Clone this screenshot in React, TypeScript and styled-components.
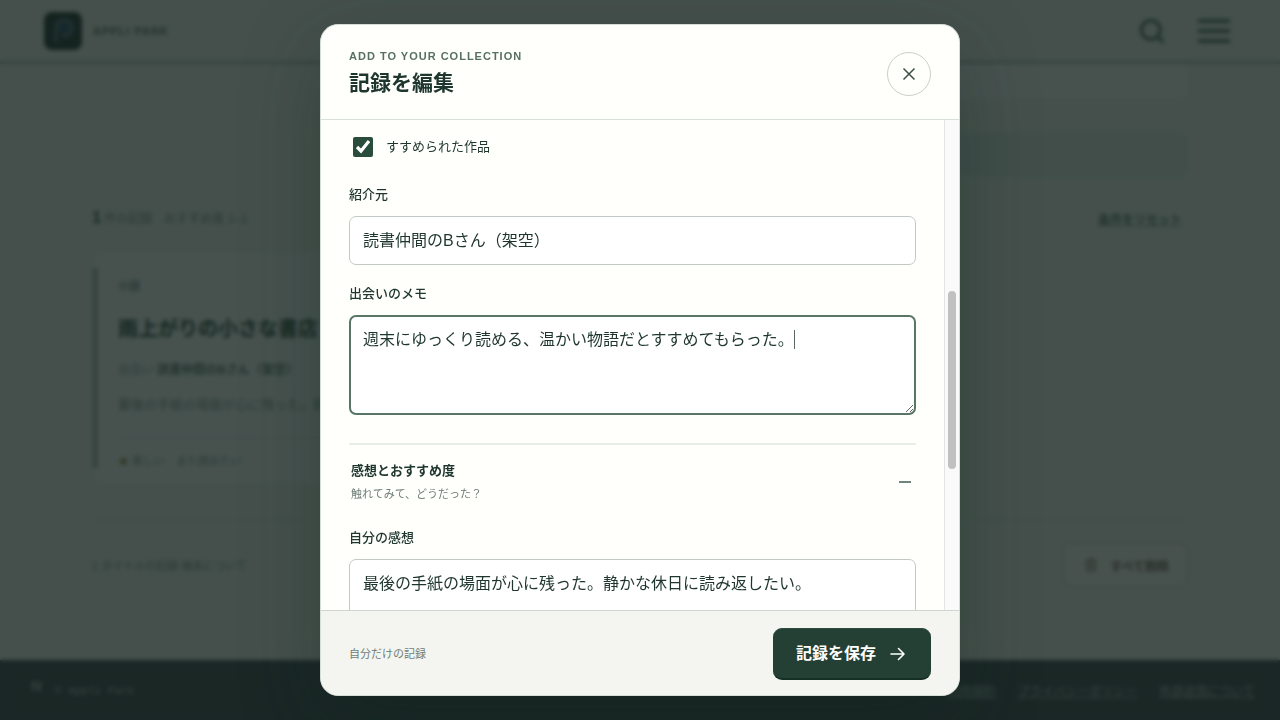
import React from 'react';
import styled, { createGlobalStyle } from 'styled-components';
import { Search, Trash2 } from 'lucide-react';

const GlobalStyle = createGlobalStyle`
  *, *::before, *::after { box-sizing: border-box; }
  body {
    margin: 0;
    color: #1f362f;
    background: #f3f5ef;
    font-family: "Liberation Sans", "Noto Sans CJK JP", sans-serif;
    overflow: hidden;
  }
  button, input, textarea { font: inherit; color: inherit; }
  h2, h3, p { margin: 0; }
`;

/* ---------- page behind the dialog ---------- */

const Page = styled.div`
  min-height: 100vh;
  display: flex;
  flex-direction: column;
`;

const SiteHeader = styled.header`
  height: 64px;
  padding: 1px 46px 0 44px;
  display: flex;
  align-items: center;
  justify-content: space-between;
  border-bottom: 3px solid #b4beb6;
`;

const Brand = styled.a`
  display: flex;
  align-items: center;
  gap: 11px;
  color: #5a6963;
  font-size: 11px;
  font-weight: 700;
  letter-spacing: 1px;
  text-decoration: none;
`;

const HeaderActions = styled.div`
  display: flex;
  align-items: center;
  gap: 28px;
`;

const PlainButton = styled.button`
  display: flex;
  padding: 0;
  border: 0;
  background: none;
  color: #587069;
`;

const Main = styled.main`
  flex: 1;
  padding: 0 92px;
`;

const SelectBar = styled.div`
  height: 34px;
  margin-left: 50%;
  border-radius: 0 0 8px 8px;
  background: #ffffff;
`;

const FilterBar = styled.div`
  height: 44px;
  margin: 35px 0 0 50%;
  border-radius: 8px;
  background: #e1ebe7;
`;

const ResultRow = styled.div`
  display: flex;
  align-items: center;
  justify-content: space-between;
  height: 24px;
  margin-top: 29px;
  padding-right: 6px;
  font-size: 12px;
  color: #84928a;

  strong { font-size: 16px; color: #2f463f; }
  a { color: #647c72; font-weight: 700; }
`;

const Cards = styled.div`
  display: grid;
  grid-template-columns: 1fr 1fr;
  gap: 16px;
  margin-top: 21px;
`;

const Card = styled.article`
  display: flex;
  background: #fdfffe;
  border: 1px solid #e4e9e4;
  border-radius: 10px;
  height: 234px;
`;

const CardSpine = styled.div`
  width: 5px;
  margin: 16px 0;
  background: #b0bab3;
`;

const CardContent = styled.div`
  flex: 1;
  padding: 24px 20px 0;
  font-size: 12px;
  line-height: 20px;
  color: #8a9790;
`;

const CardGenre = styled.p`
  font-size: 11px;
  font-weight: 700;
  color: #7b8a83;
`;

const CardTitle = styled.h3`
  margin: 18px 0 16px;
  font-size: 20px;
  line-height: 30px;
  color: #1c362d;
`;

const CardSource = styled.p`
  display: flex;
  gap: 3px;
  strong { color: #60756b; }
`;

const CardNote = styled.p`
  margin-top: 15px;
  font-size: 13px;
`;

const CardRating = styled.p`
  margin-top: 22px;
  padding-top: 13px;
  border-top: 1px solid #dbe2dc;
  font-size: 11px;
  span { color: #a08030; }
`;

const Bottom = styled.div`
  display: flex;
  align-items: center;
  justify-content: space-between;
  margin-top: 34px;
  padding-top: 23px;
  border-top: 1px solid #d5dcd6;
  font-size: 11px;
  color: #84908a;
`;

const DeleteButton = styled.button`
  display: flex;
  align-items: center;
  gap: 12px;
  height: 44px;
  padding: 0 18px 0 20px;
  border: 1px solid #d0bdb9;
  border-radius: 8px;
  background: #fffaf7;
  color: #7c5c58;
  font-size: 12px;
  font-weight: 700;
`;

const SiteFooter = styled.footer`
  height: 60px;
  padding: 1px 25px 0;
  display: flex;
  align-items: center;
  justify-content: space-between;
  background: #353b42;
  color: #a9b6b2;
  font-size: 12px;
  a { color: #b2bfba; }
`;

const Copyright = styled.div`
  display: flex;
  align-items: center;
  gap: 8px;
  font-family: "Liberation Mono", monospace;
  font-size: 11px;
`;

const FooterLinks = styled.nav`
  display: flex;
  gap: 22px;
`;

/* ---------- dialog ---------- */

const Overlay = styled.div`
  position: fixed;
  inset: 0;
  display: grid;
  place-items: center;
  padding: 24px;
  background: rgba(19, 33, 29, 0.78);
  backdrop-filter: blur(2px);
`;

const Dialog = styled.section`
  width: min(640px, 100%);
  height: calc(100vh - 48px);
  display: flex;
  flex-direction: column;
  overflow: hidden;
  border: 1px solid #d5ddd6;
  border-radius: 18px;
  background: #fffffc;
  box-shadow: 0 24px 80px rgba(14, 35, 28, 0.3);
`;

const DialogHeader = styled.header`
  display: flex;
  align-items: center;
  justify-content: space-between;
  padding: 24px 28px 20px;
  border-bottom: 1px solid #d9dfd9;
`;

const Eyebrow = styled.p`
  margin-bottom: 4px;
  font-size: 11px;
  line-height: 14px;
  font-weight: 700;
  letter-spacing: 1px;
  color: #587064;
`;

const DialogTitle = styled.h2`
  font-size: 21px;
  line-height: 32px;
`;

const CloseButton = styled.button`
  display: grid;
  place-items: center;
  width: 44px;
  height: 44px;
  padding: 0;
  border: 1px solid #cbcfca;
  border-radius: 50%;
  background: #fffffc;
  color: #3c4f48;
`;

const ScrollArea = styled.div`
  flex: 1;
  min-height: 0;
  display: flex;
`;

const Form = styled.form`
  flex: 1;
  min-width: 0;
  overflow: hidden;
  padding: 17px 28px 0;
`;

const ScrollTrack = styled.div`
  width: 15px;
  padding: 0 2px 0 3px;
  border-left: 1px solid #e4e4e6;
  background: #fafafa;
  display: grid;
  grid-template-rows: 171fr 178fr 141fr;
`;

const ScrollThumb = styled.div`
  grid-row: 2;
  width: 8px;
  border-radius: 4px;
  background: #c1c1c1;
`;

const CheckRow = styled.label`
  display: flex;
  align-items: center;
  gap: 13px;
  height: 20px;
  margin-bottom: 27px;
  font-size: 13px;
  line-height: 20px;
`;

const Checkbox = styled.input`
  width: 20px;
  height: 20px;
  margin: 0 0 0 4px;
  accent-color: #294c3b;
`;

const Field = styled.div`
  display: flex;
  flex-direction: column;
  gap: 10px;
  margin-bottom: 18px;
`;

const Label = styled.label`
  font-size: 13px;
  line-height: 22px;
  font-weight: 500;
`;

const TextInput = styled.input`
  width: 100%;
  height: 49px;
  padding: 0 13px 3px;
  border: 1px solid #c3cac4;
  border-radius: 7px;
  background: #ffffff;
  font-size: 16px;
`;

const TextArea = styled.textarea<{ $active?: boolean }>`
  display: block;
  width: 100%;
  height: 100px;
  resize: vertical;
  outline: 0;
  border: ${p => (p.$active ? '2px solid #587565' : '1px solid #c3cac4')};
  padding: ${p => (p.$active ? '10px 12px' : '11px 13px')};
  border-radius: 7px;
  background: #ffffff;
  font-size: 16px;
  line-height: 26px;
`;

const CaretArea = styled(TextArea)`
  background: linear-gradient(#5a6662, #5a6662) 443px 13px / 1px 19px no-repeat #ffffff;
`;

const SectionToggle = styled.button`
  display: flex;
  align-items: center;
  justify-content: space-between;
  width: 100%;
  margin: 28px 0 24px;
  padding: 15px 2px 0;
  border: 0;
  border-top: 2px solid #e9ede8;
  background: none;
  text-align: left;
`;

const SectionText = styled.span`
  display: grid;
  gap: 3px;
`;

const SectionTitle = styled.span`
  font-size: 13px;
  line-height: 22px;
  font-weight: 700;
`;

const SectionHint = styled.span`
  font-size: 11px;
  line-height: 18px;
  color: #6f7d76;
`;

const DialogFooter = styled.footer`
  display: flex;
  align-items: center;
  justify-content: space-between;
  padding: 17px 28px 15px;
  border-top: 1px solid #cfd6cf;
  background: #f4f5f0;
  font-size: 11px;
  line-height: 18px;
  color: #6f7d76;
`;

const SaveButton = styled.button`
  display: flex;
  align-items: center;
  gap: 14px;
  height: 52px;
  padding: 0 24px 0 23px;
  border: 1px solid #1f3d30;
  border-width: 1px 0 2px;
  border-color: #2d4c3e #1f3d30 #173026;
  border-radius: 9px;
  background: #244034;
  color: #ffffff;
  font-size: 16px;
  line-height: 24px;
  font-weight: 700;
`;

export default function App() {
  return (
    <>
      <GlobalStyle />
      <Page>
        <SiteHeader>
          <Brand href="#">
            <svg width="38" height="38" viewBox="0 0 38 38" aria-hidden="true">
              <rect width="38" height="38" rx="8" fill="#1c2b29" />
              <path d="M12 30V16a8 8 0 1 1 8 8h-2" fill="none" stroke="#50676c" strokeWidth="4" />
              <circle cx="20" cy="16" r="6" fill="#1f4364" />
            </svg>
            APPLI PARK
          </Brand>
          <HeaderActions>
            <PlainButton aria-label="検索"><Search size={28} strokeWidth={3} /></PlainButton>
            <PlainButton aria-label="メニュー">
              <svg width="40" height="40" viewBox="0 0 40 40" aria-hidden="true">
                <path d="M4 10h32M4 20h32M4 30h32" stroke="currentColor" strokeWidth="4" />
              </svg>
            </PlainButton>
          </HeaderActions>
        </SiteHeader>
        <Main>
          <SelectBar />
          <FilterBar />
          <ResultRow>
            <span><strong>1</strong> 件の記録　おすすめ度 1–1</span>
            <a href="#">条件をリセット</a>
          </ResultRow>
          <Cards>
            <Card>
              <CardSpine />
              <CardContent>
                <CardGenre>小説</CardGenre>
                <CardTitle>雨上がりの小さな書店</CardTitle>
                <CardSource>出会い<strong>読書仲間のBさん（架空）</strong></CardSource>
                <CardNote>最後の手紙の場面が心に残った。静かな休日に読み返したい。</CardNote>
                <CardRating><span>★</span> 楽しい　また読みたい</CardRating>
              </CardContent>
            </Card>
          </Cards>
          <Bottom>
            <span>1 タイトルの記録 端末について</span>
            <DeleteButton><Trash2 size={14} />すべて削除</DeleteButton>
          </Bottom>
        </Main>
        <SiteFooter>
          <Copyright>
            <svg width="22" height="22" viewBox="0 0 22 22" aria-hidden="true">
              <path d="M8 1v10M8 1l7 10M15 1v8" fill="none" stroke="#a9b6b2" strokeWidth="2" />
            </svg>
            © Appli Park
          </Copyright>
          <FooterLinks>
            <a href="#">利用規約</a>
            <a href="#">プライバシーポリシー</a>
            <a href="#">外部送信について</a>
          </FooterLinks>
        </SiteFooter>
      </Page>

      <Overlay>
        <Dialog role="dialog" aria-modal="true" aria-labelledby="dialog-title">
          <DialogHeader>
            <div>
              <Eyebrow>ADD TO YOUR COLLECTION</Eyebrow>
              <DialogTitle id="dialog-title">記録を編集</DialogTitle>
            </div>
            <CloseButton type="button" aria-label="閉じる">
              <svg width="18" height="18" viewBox="0 0 18 18" aria-hidden="true">
                <path d="M3.5 3.5l11 11M14.5 3.5l-11 11" fill="none" stroke="currentColor" strokeWidth="1.5" />
              </svg>
            </CloseButton>
          </DialogHeader>

          <ScrollArea>
            <Form id="record-form">
              <CheckRow>
                <Checkbox type="checkbox" defaultChecked />
                すすめられた作品
              </CheckRow>
              <Field>
                <Label htmlFor="source">紹介元</Label>
                <TextInput id="source" defaultValue="読書仲間のBさん（架空）" />
              </Field>
              <Field>
                <Label htmlFor="memo">出会いのメモ</Label>
                <CaretArea
                  id="memo"
                  $active
                  defaultValue="週末にゆっくり読める、温かい物語だとすすめてもらった。"
                />
              </Field>
              <SectionToggle type="button" aria-expanded="true">
                <SectionText>
                  <SectionTitle>感想とおすすめ度</SectionTitle>
                  <SectionHint>触れてみて、どうだった？</SectionHint>
                </SectionText>
                <svg width="18" height="18" viewBox="0 0 18 18" aria-hidden="true">
                  <path d="M3 9h12" stroke="#4b665a" strokeWidth="1.600" />
                </svg>
              </SectionToggle>
              <Field>
                <Label htmlFor="impression">自分の感想</Label>
                <TextArea
                  id="impression"
                  defaultValue="最後の手紙の場面が心に残った。静かな休日に読み返したい。"
                />
              </Field>
            </Form>
            <ScrollTrack aria-hidden="true">
              <ScrollThumb />
            </ScrollTrack>
          </ScrollArea>

          <DialogFooter>
            <span>自分だけの記録</span>
            <SaveButton type="submit" form="record-form">
              記録を保存
              <svg width="17" height="18" viewBox="0 0 17 18" aria-hidden="true">
                <path
                  d="M1 9h13M8.5 3.5L14 9l-5.500 5.500"
                  fill="none"
                  stroke="currentColor"
                  strokeWidth="1.600"
                  strokeLinecap="round"
                  strokeLinejoin="round"
                />
              </svg>
            </SaveButton>
          </DialogFooter>
        </Dialog>
      </Overlay>
    </>
  );
}
